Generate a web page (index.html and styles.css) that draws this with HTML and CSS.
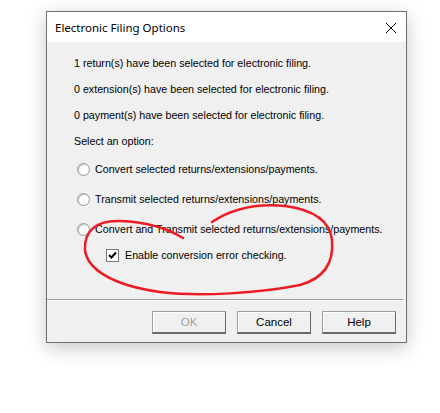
FILE: index.html
```html
<!DOCTYPE html>
<html>
<head>
<meta charset="utf-8">
<link rel="stylesheet" href="styles.css">
</head>
<body>
<div class="stage">
  <div class="dialog">
    <div class="titlebar">
      <span class="title">Electronic Filing Options</span>
      <svg class="close" width="12" height="12" viewBox="0 0 12 12"><path d="M1 1 L11 11 M11 1 L1 11" stroke="#000" stroke-width="1"/></svg>
    </div>
    <div class="body">
      <div class="info">1 return(s) have been selected for electronic filing.</div>
      <div class="info">0 extension(s) have been selected for electronic filing.</div>
      <div class="info">0 payment(s) have been selected for electronic filing.</div>
      <div class="info">Select an option:</div>
      <div class="radio-row"><span class="radio"></span><span>Convert selected returns/extensions/payments.</span></div>
      <div class="radio-row"><span class="radio"></span><span>Transmit selected returns/extensions/payments.</span></div>
      <div class="radio-row"><span class="radio"></span><span>Convert and Transmit selected returns/extensions/payments.</span></div>
      <div class="check-row"><span class="check"><svg width="9" height="9" viewBox="0 0 9 9"><path d="M1 4 L3.5 6.5 L8 1.5" stroke="#000" stroke-width="2" fill="none"/></svg></span><span>Enable conversion error checking.</span></div>
    </div>
    <div class="separator"></div>
    <div class="buttons">
      <div class="btn disabled">OK</div>
      <div class="btn">Cancel</div>
      <div class="btn">Help</div>
    </div>
  </div>
  <svg class="annot" width="440" height="413" viewBox="0 0 440 413">
    <path d="M183,238 C170,230 150,222 120,221 C95,220 84,232 85,250 C87,268 110,285 160,292 C200,297 260,293 300,285 C325,278 334,262 332,240 C330,222 315,210 285,206 C255,203 230,210 212,222" stroke="#ec1c24" stroke-width="2.5" fill="none" stroke-linecap="round"/>
  </svg>
</div>
</body>
</html>
```

FILE: styles.css
```css
html, body {
  margin: 0;
  padding: 0;
  background: #ffffff;
}
.stage {
  position: relative;
  width: 440px;
  height: 413px;
  padding: 11px 0 0 46px;
  box-sizing: border-box;
}
.dialog {
  width: 361px;
  height: 332px;
  box-sizing: border-box;
  border: 1px solid #6f6f6f;
  background: #f0f0f0;
  box-shadow: 0 5px 18px rgba(0,0,0,0.22);
  display: flex;
  flex-direction: column;
  font-family: "Liberation Sans", Arial, sans-serif;
  font-size: 10.7px;
  color: #000;
}
.titlebar {
  height: 30px;
  background: #ffffff;
  display: flex;
  align-items: center;
  justify-content: space-between;
  padding: 0 9px 0 8px;
}
.title {
  font-family: "Noto Sans", sans-serif;
  font-size: 11.5px;
  color: #000;
}
.close {
  margin-top: 1px;
}
.body {
  padding: 8px 0 0 27px;
  display: flex;
  flex-direction: column;
}
.info {
  height: 26px;
  line-height: 26px;
}
.radio-row {
  display: flex;
  align-items: center;
  height: 30px;
  margin-left: 3px;
  gap: 5px;
}
.radio {
  width: 11px;
  height: 11px;
  border-radius: 50%;
  border: 1px solid #9a9a9a;
  background: radial-gradient(circle at 50% 50%, #ffffff 55%, #e6e6e6 100%);
  box-shadow: inset 1px 1px 1px #c4c4c4;
}
.check-row {
  display: flex;
  align-items: center;
  height: 22px;
  margin-left: 32px;
  gap: 6px;
}
.check {
  width: 11px;
  height: 11px;
  border: 1px solid #7a7a7a;
  background: #fff;
  display: flex;
  align-items: center;
  justify-content: center;
}
.separator {
  margin: auto 3px 0 0;
  border-top: 1px solid #a0a0a0;
  border-bottom: 1px solid #ffffff;
}
.buttons {
  display: flex;
  justify-content: flex-end;
  gap: 11px;
  padding: 10px 10px 8px 0;
}
.btn {
  width: 74px;
  height: 23px;
  box-sizing: border-box;
  border: 1px solid;
  border-color: #a0a0a0 #6a6a6a #6a6a6a #a0a0a0;
  border-bottom-width: 2px;
  box-shadow: inset 1px 1px #ffffff;
  background: #f0f0f0;
  display: flex;
  align-items: center;
  justify-content: center;
  font-size: 11.5px;
}
.btn.disabled {
  color: #a0a0a0;
}
.annot {
  position: absolute;
  left: 0;
  top: 0;
  pointer-events: none;
}
```
